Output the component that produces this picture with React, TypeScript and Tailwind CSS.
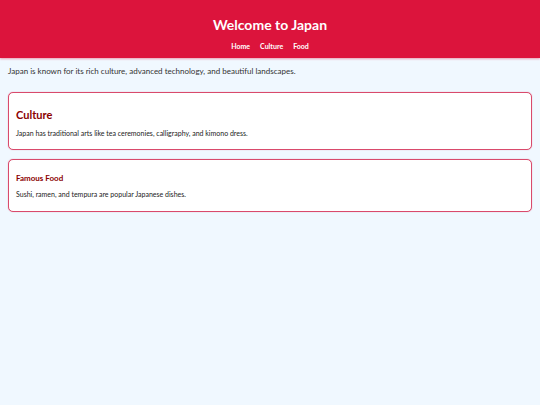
import React from "react";

export default function App() {
  const font = { fontFamily: 'Lato, "Open Sans", sans-serif' };
  return (
    <div className="min-h-[405px] bg-[#f0f8ff]" style={font}>
      <header className="bg-[#dc143c] h-[58px] flex flex-col items-center pt-[16px] text-white shadow-[0_1px_2px_rgba(220,20,60,0.4)]">
        <h1 className="text-[14px] font-bold leading-[18px]">Welcome to Japan</h1>
        <nav className="flex gap-[10px] mt-[7px] text-[7px] font-bold leading-[10px]">
          <span>Home</span>
          <span>Culture</span>
          <span>Food</span>
        </nav>
      </header>
      <main className="px-[8px]">
        <p className="text-[8px] text-[#333] mt-[7px] leading-[12px]">
          Japan is known for its rich culture, advanced technology, and beautiful landscapes.
        </p>
        <section className="mt-[15px] bg-white border border-[#d94a6c] rounded-[5px] h-[58px] px-[7px] pt-[15px] shadow-[0_0_1px_rgba(220,20,60,0.5)]">
          <h2 className="text-[11px] font-bold text-[#8b0000] leading-[13px]">Culture</h2>
          <p className="text-[7px] text-[#222] mt-[7px] leading-[10px]">
            Japan has traditional arts like tea ceremonies, calligraphy, and kimono dress.
          </p>
        </section>
        <section className="mt-[9px] bg-white border border-[#d94a6c] rounded-[5px] h-[53px] px-[7px] pt-[13px] shadow-[0_0_1px_rgba(220,20,60,0.5)]">
          <h3 className="text-[8px] font-bold text-[#8b0000] leading-[10px]">Famous Food</h3>
          <p className="text-[7px] text-[#222] mt-[6px] leading-[10px]">
            Sushi, ramen, and tempura are popular Japanese dishes.
          </p>
        </section>
      </main>
    </div>
  );
}
